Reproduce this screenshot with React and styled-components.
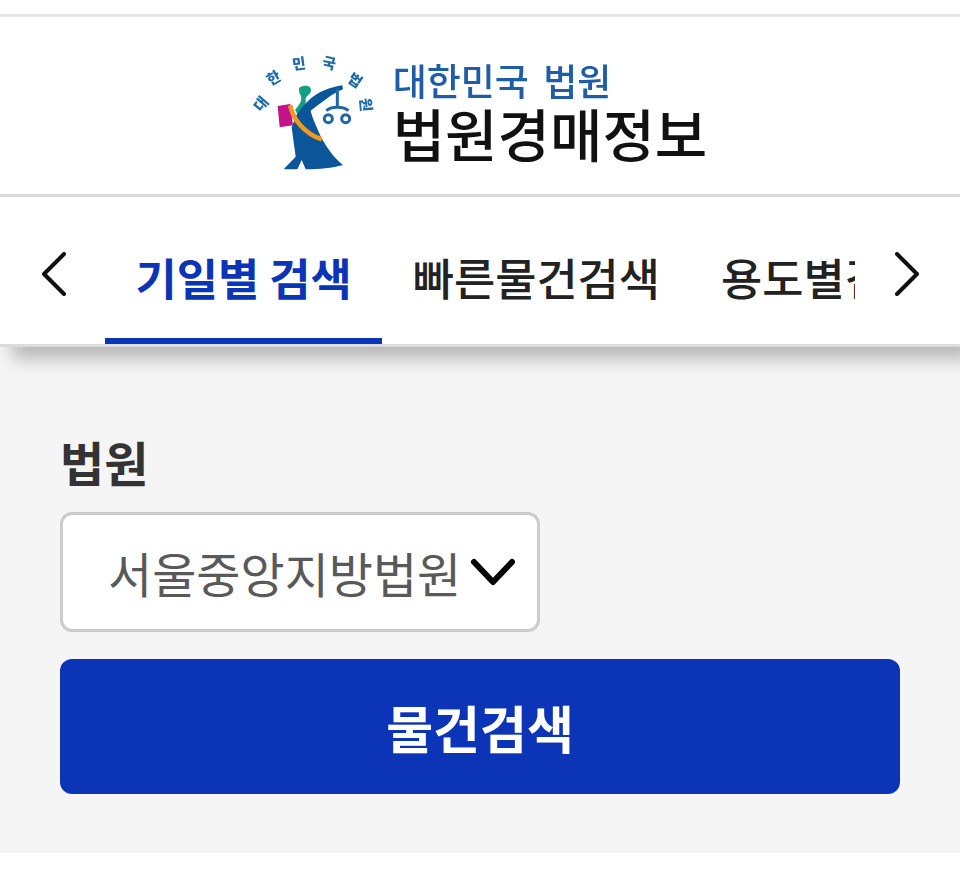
import styled, { createGlobalStyle } from "styled-components";

const GlobalStyle = createGlobalStyle`
  html, body {
    margin: 0;
    background: #fff;
    font-family: "Noto Sans CJK KR", "Noto Sans", sans-serif;
  }
  * { box-sizing: border-box; }
`;

const tabs = [
  { label: "기일별 검색", active: true },
  { label: "빠른물건검색" },
  { label: "용도별검색" },
];

const Seal = () => (
  <SealSvg viewBox="0 0 390 375">
    <g fill="#1f6aa8" fontSize="44" fontWeight="900" textAnchor="middle">
      <text transform="translate(48 172) rotate(-50)">대</text>
      <text transform="translate(82 98) rotate(-30)">한</text>
      <text transform="translate(152 57) rotate(-8)">민</text>
      <text transform="translate(237 55) rotate(12)">국</text>
      <text transform="translate(309 104) rotate(35)">법</text>
      <text transform="translate(335 166) rotate(85)">원</text>
    </g>
    <path d="M86 168 L124 162 L132 226 L92 232 Z" fill="#c4118c" />
    <path
      d="M152 112 C165 104 186 106 186 120 C186 134 172 136 170 146 L170 172 L150 200 L138 180 C150 165 160 155 156 138 C150 130 148 118 152 112 Z"
      fill="#12a083"
    />
    <path
      d="M280 106 C245 112 205 125 178 152 C165 165 150 180 142 196 L128 232 L140 320 L104 358 L145 358 L158 330 L170 358 C210 358 250 354 282 345 C255 325 235 295 218 265 C205 235 190 205 185 182 C215 160 250 130 282 118 Z"
      fill="#0b5698"
    />
    <path d="M124 166 C130 205 165 250 218 268" fill="none" stroke="#f29a1f" strokeWidth="14" />
    <g fill="none" stroke="#1f66a6" strokeWidth="9">
      <path d="M265 115 V172" />
      <path d="M232 182 C245 168 285 168 298 182" />
      <circle cx="238" cy="206" r="12" />
      <circle cx="290" cy="206" r="12" />
    </g>
  </SealSvg>
);

const App = () => {
  return (
    <>
      <GlobalStyle />
      <Header>
        <Logo>
          <Seal />
          <LogoText>
            <LogoSub>대한민국 법원</LogoSub>
            <LogoTitle>법원경매정보</LogoTitle>
          </LogoText>
        </Logo>
      </Header>
      <TabBar>
        <ArrowSlot>
          <svg width="28" height="44" viewBox="0 0 28 44">
            <path d="M25 2 L5 22 L25 42" fill="none" stroke="#111" strokeWidth="4" strokeLinecap="round" strokeLinejoin="round" />
          </svg>
        </ArrowSlot>
        <TabScroller>
          {tabs.map((tab) => (
            <Tab key={tab.label} $active={tab.active}>
              {tab.label}
            </Tab>
          ))}
        </TabScroller>
        <ArrowSlot>
          <svg width="28" height="44" viewBox="0 0 28 44">
            <path d="M3 2 L23 22 L3 42" fill="none" stroke="#111" strokeWidth="4" strokeLinecap="round" strokeLinejoin="round" />
          </svg>
        </ArrowSlot>
      </TabBar>
      <SearchSection>
        <FieldLabel>법원</FieldLabel>
        <SelectBox>
          <SelectValue>서울중앙지방법원</SelectValue>
          <svg width="46" height="28" viewBox="0 0 46 28">
            <path d="M4 4 L23 24 L42 4" fill="none" stroke="#050505" strokeWidth="6" strokeLinecap="round" strokeLinejoin="round" />
          </svg>
        </SelectBox>
        <SearchButton>물건검색</SearchButton>
      </SearchSection>
    </>
  );
};

export default App;

const Header = styled.header`
  margin-top: 14px;
  height: 183px;
  background: #fff;
  border-top: 3px solid #e5e5e5;
  border-bottom: 3px solid #dcdcdc;
  display: flex;
  justify-content: center;
`;

const Logo = styled.div`
  display: flex;
  margin-right: 4px;
  padding-top: 33px;
  gap: 14px;
  filter: blur(0.6px);
`;

const SealSvg = styled.svg`
  flex: none;
  width: 130px;
  height: 125px;
  filter: blur(0.5px);
`;

const LogoText = styled.div`
  display: flex;
  flex-direction: column;
  padding-top: 9px;
`;

const LogoSub = styled.span`
  font-size: 37px;
  line-height: 42px;
  font-weight: 500;
  word-spacing: 6px;
  color: #1f5ea6;
`;

const LogoTitle = styled.span`
  font-size: 57px;
  line-height: 62px;
  font-weight: 500;
  color: #111;
`;

const TabBar = styled.nav`
  position: relative;
  z-index: 1;
  height: 150px;
  background: #fff;
  border-bottom: 3px solid #dcdcdc;
  box-shadow: 12px 12px 16px rgba(0, 0, 0, 0.25);
  display: flex;
`;

const ArrowSlot = styled.div`
  flex: 0 0 105px;
  display: flex;
  justify-content: center;
  padding-top: 55px;
`;

const TabScroller = styled.div`
  flex: 1;
  min-width: 0;
  display: flex;
  overflow: hidden;
`;

const Tab = styled.div`
  flex: none;
  height: 147px;
  padding: 50px 30.5px 0;
  font-size: 44.8px;
  line-height: 60px;
  white-space: nowrap;
  font-weight: ${(p) => (p.$active ? 700 : 500)};
  color: ${(p) => (p.$active ? "#0c34b6" : "#222")};
  border-bottom: 6px solid ${(p) => (p.$active ? "#0c34b6" : "transparent")};
`;

const SearchSection = styled.section`
  height: 506px;
  background: #f5f5f5;
  padding: 82px 60px 0;
  display: flex;
  flex-direction: column;
`;

const FieldLabel = styled.label`
  font-size: 48px;
  line-height: 64px;
  font-weight: 700;
  color: #333;
  margin-bottom: 19px;
`;

const SelectBox = styled.div`
  width: 480px;
  height: 120px;
  background: #fff;
  border: 3px solid #ccc;
  border-radius: 12px;
  display: flex;
  align-items: center;
  padding-left: 45px;
  gap: 9px;
`;

const SelectValue = styled.span`
  font-size: 48px;
  line-height: 64px;
  color: #595959;
  white-space: nowrap;
`;

const SearchButton = styled.button`
  margin-top: 27px;
  height: 135px;
  border: 0;
  border-radius: 12px;
  background: #0c34b6;
  color: #fff;
  font-family: inherit;
  font-size: 51px;
  font-weight: 700;
`;
